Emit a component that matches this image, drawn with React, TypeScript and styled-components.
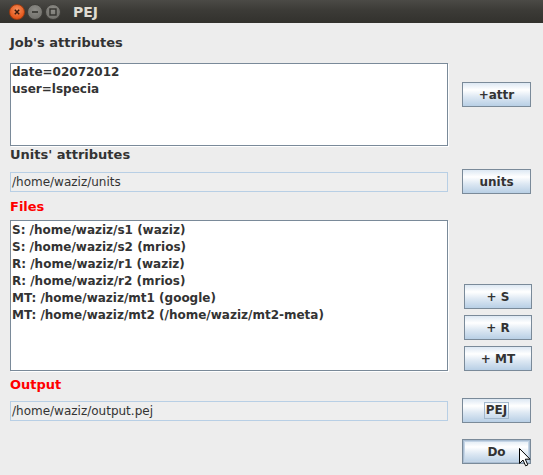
import React from "react";
import styled, { createGlobalStyle } from "styled-components";

const Global = createGlobalStyle`
  html, body { margin: 0; padding: 0; background: #ededed; }
  body { font-family: "DejaVu Sans", "Liberation Sans", sans-serif; }
`;

const Window = styled.div`
  width: 543px;
  height: 475px;
  background: #ededed;
  display: flex;
  flex-direction: column;
  overflow: hidden;
`;

const TitleBar = styled.div`
  height: 23px;
  flex: none;
  box-sizing: border-box;
  background: linear-gradient(#4b4a46, #3c3b37 45%, #32312d);
  display: flex;
  align-items: center;
  padding-left: 9px;
`;

const Controls = styled.div`
  display: flex;
  gap: 2px;
  align-items: center;
`;

const Circle = styled.div<{ $close?: boolean }>`
  width: 16px;
  height: 16px;
  border-radius: 50%;
  box-sizing: border-box;
  display: flex;
  align-items: center;
  justify-content: center;
  background: ${(p) =>
    p.$close
      ? "radial-gradient(circle at 50% 35%, #f7915e, #e4571b 70%, #c9430f)"
      : "radial-gradient(circle at 50% 35%, #8e8d88, #75746f 70%, #62615c)"};
  border: 1px solid ${(p) => (p.$close ? "#9c3c12" : "#403f3b")};
`;

const Title = styled.div`
  margin-left: 12px;
  font: bold 14px/16px "DejaVu Sans", sans-serif;
  color: #dfdbd2;
`;

const Content = styled.div`
  display: flex;
  flex-direction: column;
  padding: 12px 12px 0 10px;
`;

const SectionLabel = styled.div<{ $red?: boolean; $mt: number }>`
  font: bold 13px/16px "DejaVu Sans", sans-serif;
  height: 16px;
  color: ${(p) => (p.$red ? "#ff0000" : "#333333")};
  margin-top: ${(p) => p.$mt}px;
`;

const Row = styled.div<{ $mt: number; $align?: string }>`
  display: flex;
  gap: 14px;
  margin-top: ${(p) => p.$mt}px;
  align-items: ${(p) => p.$align || "flex-start"};
`;

const TextBox = styled.div<{ $h: number }>`
  width: 438px;
  height: ${(p) => p.$h}px;
  flex: none;
  box-sizing: border-box;
  background: #ffffff;
  border: 1px solid #7a8a99;
  box-shadow: 1px 1px 0 #ffffff;
  padding: ${(p) => (p.$h > 100 ? "1px" : "0")} 1px 0 1px;
  font: bold 12px/17px "DejaVu Sans", sans-serif;
  color: #333333;
  white-space: pre;
`;

const Field = styled.div`
  width: 438px;
  height: 20px;
  flex: none;
  box-sizing: border-box;
  background: #eeeeee;
  border: 1px solid #b8cfe5;
  padding: 0 1px;
  font: 12px/18px "DejaVu Sans", sans-serif;
  color: #333333;
`;

const ButtonColumn = styled.div<{ $pt?: number; $end?: boolean }>`
  display: flex;
  flex-direction: column;
  gap: 6px;
  padding-top: ${(p) => p.$pt || 0}px;
  align-self: ${(p) => (p.$end ? "flex-end" : "flex-start")};
`;

const Button = styled.button<{ $narrow?: boolean; $hover?: boolean }>`
  position: relative;
  width: ${(p) => (p.$narrow ? 68 : 69)}px;
  height: 25px;
  margin: 0 0 0 ${(p) => (p.$narrow ? 2 : 0)}px;
  padding: 0;
  box-sizing: border-box;
  border: 1px solid #7a8a99;
  border-radius: 0;
  background: linear-gradient(
    #dde8f3 0%,
    #ffffff 30%,
    #dde8f3 60%,
    #b8cfe5 100%
  );
  box-shadow: ${(p) =>
    p.$hover ? "inset 0 0 0 1px #a9bdd2, inset 0 0 0 2px #c5d5e6" : "none"};
  font: bold 12px/14px "DejaVu Sans", sans-serif;
  color: #333333;
  display: flex;
  align-items: center;
  justify-content: center;
  white-space: pre;
`;

const Focus = styled.span`
  border: 1px solid #a3b8cc;
  padding: 1px 1px;
  line-height: 13px;
`;

const Pointer = styled.svg`
  position: absolute;
  left: 56px;
  top: 8px;
  overflow: visible;
`;

const EndRow = styled.div`
  display: flex;
  justify-content: flex-end;
  margin-top: 16px;
`;

export default function App() {
  return (
    <Window>
      <Global />
      <TitleBar>
        <Controls>
          <Circle $close>
            <svg width="6" height="6" viewBox="0 0 6 6">
              <path d="M0.8 0.8L5.2 5.2M5.2 0.8L0.8 5.2" stroke="#3a1a0c" strokeWidth="1.5" />
            </svg>
          </Circle>
          <Circle>
            <svg width="8" height="8" viewBox="0 0 8 8">
              <path d="M1 4H7" stroke="#33322e" strokeWidth="1.6" />
            </svg>
          </Circle>
          <Circle>
            <svg width="8" height="8" viewBox="0 0 8 8">
              <rect x="1" y="1" width="6" height="6" fill="none" stroke="#33322e" strokeWidth="1.4" />
            </svg>
          </Circle>
        </Controls>
        <Title>PEJ</Title>
      </TitleBar>
      <Content>
        <SectionLabel $mt={0}>Job's attributes</SectionLabel>
        <Row $mt={12}>
          <TextBox $h={83}>{"date=02072012\nuser=lspecia"}</TextBox>
          <ButtonColumn $pt={19}>
            <Button>+attr</Button>
          </ButtonColumn>
        </Row>
        <SectionLabel $mt={1}>Units' attributes</SectionLabel>
        <Row $mt={6} $align="center">
          <Field>/home/waziz/units</Field>
          <Button>units</Button>
        </Row>
        <SectionLabel $red $mt={5}>Files</SectionLabel>
        <Row $mt={5}>
          <TextBox $h={151}>
            {"S: /home/waziz/s1 (waziz)\nS: /home/waziz/s2 (mrios)\nR: /home/waziz/r1 (waziz)\nR: /home/waziz/r2 (mrios)\nMT: /home/waziz/mt1 (google)\nMT: /home/waziz/mt2 (/home/waziz/mt2-meta)"}
          </TextBox>
          <ButtonColumn $end>
            <Button $narrow>+ S</Button>
            <Button $narrow>+ R</Button>
            <Button $narrow>+ MT</Button>
          </ButtonColumn>
        </Row>
        <SectionLabel $red $mt={6}>Output</SectionLabel>
        <Row $mt={5} $align="center">
          <Field>/home/waziz/output.pej</Field>
          <Button>
            <Focus>PEJ</Focus>
          </Button>
        </Row>
        <EndRow>
          <Button $hover>
            Do
            <Pointer width="12" height="19" viewBox="0 0 12 19">
              <path
                d="M0.5 0.5 L0.5 15.5 L4 12 L6.6 17.8 L8.8 16.9 L6.3 11.2 L11 11.2 Z"
                fill="#ffffff"
                stroke="#000000"
                strokeWidth="1"
                strokeLinejoin="miter"
              />
            </Pointer>
          </Button>
        </EndRow>
      </Content>
    </Window>
  );
}
